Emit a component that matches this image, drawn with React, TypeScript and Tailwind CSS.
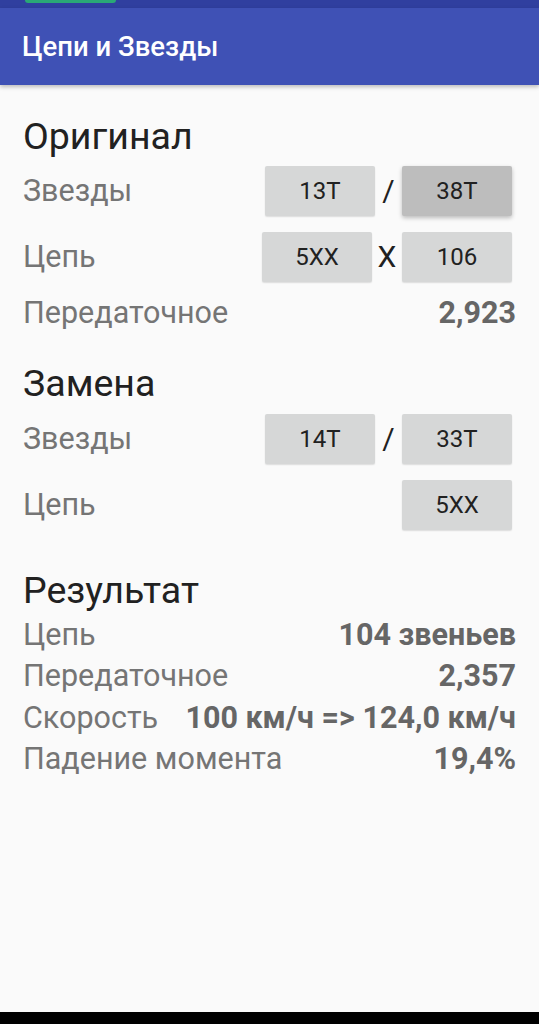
import React from "react";

const font = { fontFamily: "Roboto, 'Noto Sans', sans-serif" };

function Btn({ label, pressed }: { label: string; pressed?: boolean }) {
  return (
    <div
      className={`w-[110px] h-[50px] rounded-[2px] flex items-center justify-center text-[24px] text-[#212121] ${
        pressed
          ? "bg-[#bdbdbd] shadow-[0_2px_4px_rgba(0,0,0,0.25)]"
          : "bg-[#d6d7d7] shadow-[0_1px_1.5px_rgba(0,0,0,0.12)]"
      }`}
    >
      {label}
    </div>
  );
}

function Sep({ ch, w }: { ch: string; w: string }) {
  return (
    <div className={`${w} flex items-center justify-center text-[30px] text-[#212121] leading-none`}>
      {ch}
    </div>
  );
}

function Label({ children }: { children: React.ReactNode }) {
  return <div className="text-[30.5px] text-[#757575] leading-none whitespace-nowrap">{children}</div>;
}

function Value({ children }: { children: React.ReactNode }) {
  return <div className="text-[30.5px] font-bold text-[#666666] leading-none whitespace-nowrap">{children}</div>;
}

function Heading({ children, cls }: { children: React.ReactNode; cls: string }) {
  return (
    <div className={`h-[40px] flex items-center text-[37.5px] text-[#212121] ${cls}`}>{children}</div>
  );
}

export default function App() {
  return (
    <div className="w-[539px] h-[1024px] flex flex-col bg-[#fafafa]" style={font}>
      <div className="h-[8px] bg-[#303f9f] relative">
        <div className="absolute left-[25px] top-0 w-[91px] h-[3px] rounded-b-full bg-[#2aa876]" />
      </div>
      <div className="h-[77px] bg-[#3f51b5] flex items-center px-[22px] shadow-[0_2px_4px_rgba(0,0,0,0.25)] relative z-10">
        <span className="text-white text-[27.5px] font-medium">Цепи и Звезды</span>
      </div>
      <div className="flex-1 flex flex-col px-[23px] pt-[31px]">
        <Heading cls="">Оригинал</Heading>
        <div className="mt-[2px] h-[66px] flex items-center justify-between pr-[4px]">
          <Label>Звезды</Label>
          <div className="flex items-center">
            <Btn label="13T" />
            <Sep ch="/" w="w-[27px]" />
            <Btn label="38T" pressed />
          </div>
        </div>
        <div className="h-[66px] flex items-center justify-between pr-[4px]">
          <Label>Цепь</Label>
          <div className="flex items-center">
            <Btn label="5XX" />
            <Sep ch="X" w="w-[30px]" />
            <Btn label="106" />
          </div>
        </div>
        <div className="h-[46px] flex items-center justify-between">
          <Label>Передаточное</Label>
          <Value>2,923</Value>
        </div>
        <Heading cls="mt-[27px]">Замена</Heading>
        <div className="mt-[3px] h-[66px] flex items-center justify-between pr-[4px]">
          <Label>Звезды</Label>
          <div className="flex items-center">
            <Btn label="14T" />
            <Sep ch="/" w="w-[27px]" />
            <Btn label="33T" />
          </div>
        </div>
        <div className="h-[66px] flex items-center justify-between pr-[4px]">
          <Label>Цепь</Label>
          <Btn label="5XX" />
        </div>
        <Heading cls="mt-[32px]">Результат</Heading>
        <div className="mt-[4px] flex flex-col">
          <div className="h-[41.5px] flex items-center justify-between">
            <Label>Цепь</Label>
            <Value>104 звеньев</Value>
          </div>
          <div className="h-[41.5px] flex items-center justify-between">
            <Label>Передаточное</Label>
            <Value>2,357</Value>
          </div>
          <div className="h-[41.5px] flex items-center justify-between">
            <Label>Скорость</Label>
            <Value>100 км/ч =&gt; 124,0 км/ч</Value>
          </div>
          <div className="h-[41.5px] flex items-center justify-between">
            <Label>Падение момента</Label>
            <Value>19,4%</Value>
          </div>
        </div>
      </div>
      <div className="h-[12px] bg-black" />
    </div>
  );
}
